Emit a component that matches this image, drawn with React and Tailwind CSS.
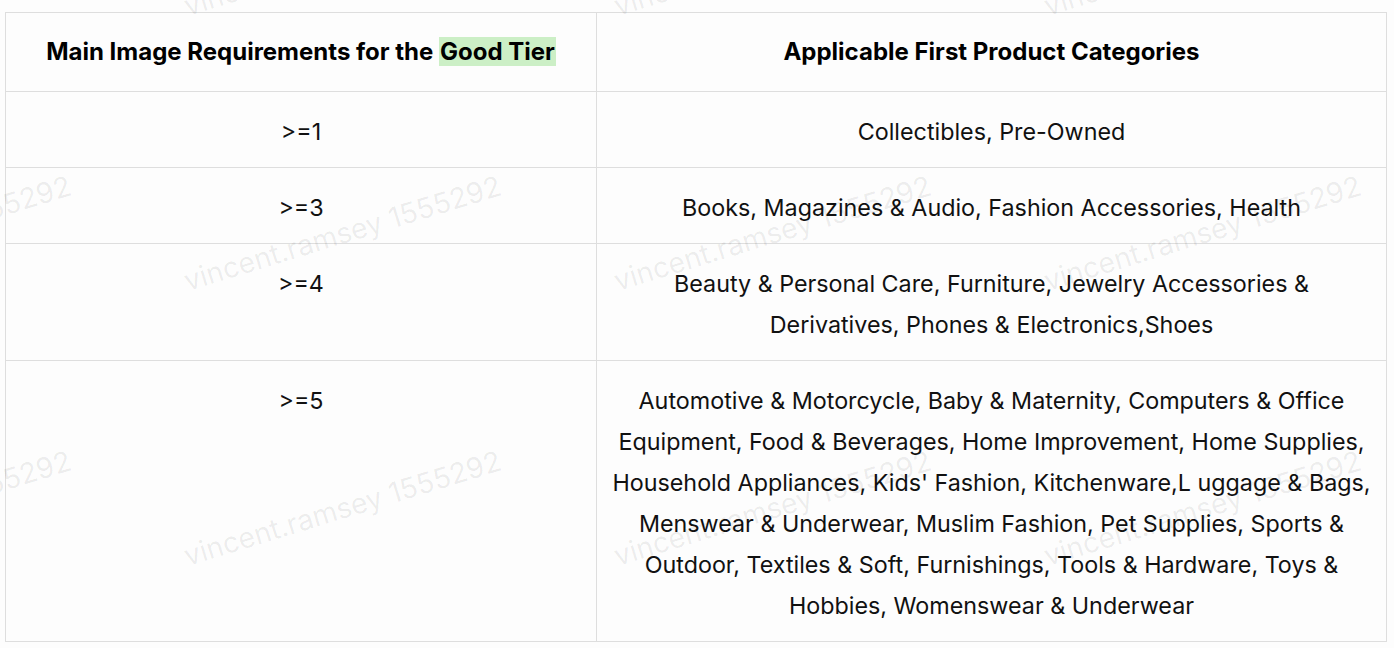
import React from 'react';

const rows = [
  { min: '>=1', cats: 'Collectibles, Pre-Owned' },
  { min: '>=3', cats: 'Books, Magazines & Audio, Fashion Accessories, Health' },
  {
    min: '>=4',
    cats: 'Beauty & Personal Care, Furniture, Jewelry Accessories & Derivatives, Phones & Electronics,Shoes',
  },
  {
    min: '>=5',
    cats:
      "Automotive & Motorcycle, Baby & Maternity, Computers & Office Equipment, Food & Beverages, Home Improvement, Home Supplies, Household Appliances, Kids' Fashion, Kitchenware,L uggage & Bags, Menswear & Underwear, Muslim Fashion, Pet Supplies, Sports & Outdoor, Textiles & Soft, Furnishings, Tools & Hardware, Toys & Hobbies, Womenswear & Underwear",
  },
];

// watermark tiles: left/bottom of each text run
const marks = [];
[15, 290, 565].forEach((y) => {
  [-245, 185, 615, 1045].forEach((x) => marks.push({ x, y }));
});

const Watermarks = () => (
  <div className="pointer-events-none absolute inset-0 overflow-hidden">
    {marks.map((m, i) => (
      <div
        key={i}
        className="absolute origin-bottom-left -rotate-[17deg] whitespace-nowrap text-[28.5px] leading-none text-black/[0.07]"
        style={{ left: m.x + 4, top: m.y - 23 }}
      >
        vincent.ramsey 1555292
      </div>
    ))}
  </div>
);

export default function App() {
  return (
    <div
      className="relative h-[648px] w-[1394px] overflow-hidden bg-[#fdfdfd] pt-3 pl-[5px] text-[#111]"
      style={{ fontFamily: 'Inter, "Noto Sans", sans-serif' }}
    >
      <table className="w-[1382px] table-fixed border-collapse">
        <colgroup>
          <col className="w-[591px]" />
          <col />
        </colgroup>
        <thead>
          <tr>
            <th className="border border-[#dedede] px-3 py-[18px] text-center text-[24px] font-bold leading-[42px] text-black">
              Main Image Requirements for the <span className="bg-[#ccefc6] px-px">Good Tier</span>
            </th>
            <th className="border border-[#dedede] px-3 py-[18px] text-center text-[24px] font-bold leading-[42px] text-black">
              Applicable First Product Categories
            </th>
          </tr>
        </thead>
        <tbody>
          {rows.map((r) => (
            <tr key={r.min}>
              <td className="border border-[#dedede] px-3 pt-[19px] pb-[15px] text-center align-top text-[23.3px] leading-[41px]">
                {r.min}
              </td>
              <td className="border border-[#dedede] px-3 pt-[19px] pb-[15px] text-center align-top text-[23.3px] leading-[41px]">
                {r.cats}
              </td>
            </tr>
          ))}
        </tbody>
      </table>
      <Watermarks />
    </div>
  );
}
